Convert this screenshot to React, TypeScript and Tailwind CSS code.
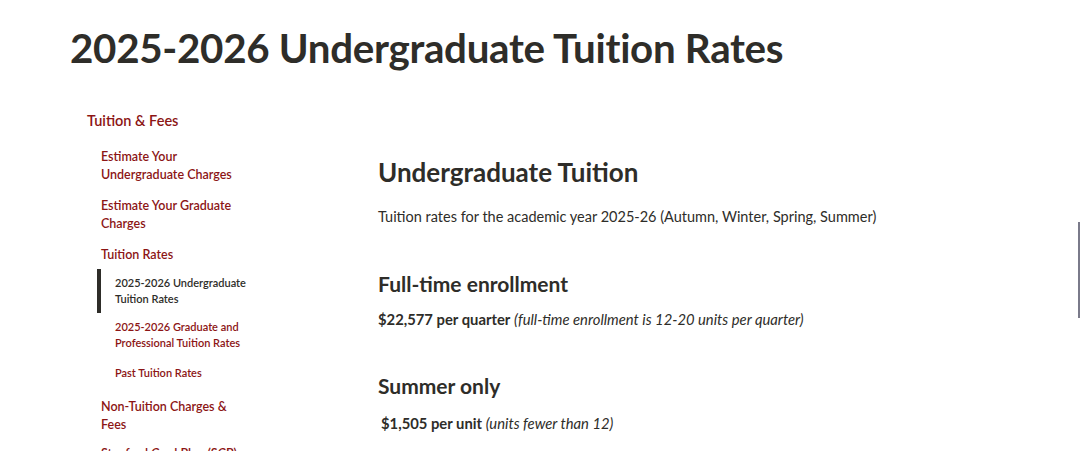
const NAV_RED = "text-[#8c1515]";

function SubLink({ children, active }: { children: React.ReactNode; active?: boolean }) {
  return (
    <li
      className={`border-l-4 pl-[14px] text-[11px] font-semibold leading-[16px] ${
        active ? "border-[#2e2d29] py-[6px] text-[#2e2d29]" : `border-transparent py-[5px] ${NAV_RED}`
      }`}
    >
      {children}
    </li>
  );
}

export default function App() {
  return (
    <div className="relative h-[451px] w-[1080px] overflow-hidden bg-white font-['Lato',sans-serif] text-[#2e2d29]">
      <h1 className="pl-[70px] pt-[24px] text-[40.3px] font-bold leading-[48px] tracking-[-0.3px]">
        2025-2026 Undergraduate Tuition Rates
      </h1>

      <div className="flex pt-[39px]">
        {/* sidebar */}
        <nav className="w-[290px] shrink-0 pl-[87px]">
          <p className={`text-[14.5px] font-semibold leading-[20px] ${NAV_RED}`}>Tuition &amp; Fees</p>
          <ul className="mt-[17px] w-[175px] pl-[14px]">
            <li className={`pb-[13px] text-[12.5px] font-semibold leading-[18px] ${NAV_RED}`}>
              Estimate Your
              <br />
              Undergraduate Charges
            </li>
            <li className={`pb-[13px] text-[12.5px] font-semibold leading-[18px] ${NAV_RED}`}>
              Estimate Your Graduate
              <br />
              Charges
            </li>
            <li className={`pb-[5px] text-[12.5px] font-semibold leading-[18px] ${NAV_RED}`}>Tuition Rates</li>
            <li>
              <ul className="-ml-[4px] pb-[12px]">
                <SubLink active>
                  2025-2026 Undergraduate
                  <br />
                  Tuition Rates
                </SubLink>
                <li className="h-[1px]" />
                <SubLink>
                  2025-2026 Graduate and
                  <br />
                  Professional Tuition Rates
                </SubLink>
                <li className="h-[4px]" />
                <SubLink>Past Tuition Rates</SubLink>
              </ul>
            </li>
            <li className={`pb-[11px] text-[12.5px] font-semibold leading-[18px] ${NAV_RED}`}>
              Non-Tuition Charges &amp;
              <br />
              Fees
            </li>
            <li className={`text-[12.5px] font-semibold leading-[18px] ${NAV_RED}`}>Stanford Card Plan (SCP)</li>
          </ul>
        </nav>

        {/* main content */}
        <main className="pl-[88px] pt-[45px]">
          <h2 className="text-[26px] font-bold leading-[32px]">Undergraduate Tuition</h2>
          <p className="mt-[18px] text-[14.5px] leading-[22px]">
            Tuition rates for the academic year 2025-26 (Autumn, Winter, Spring, Summer)
          </p>

          <h3 className="mt-[42px] text-[21px] font-bold leading-[28px]">Full-time enrollment</h3>
          <p className="mt-[10px] text-[14.8px] leading-[22px]">
            <span className="font-bold">$22,577 per quarter</span>{" "}
            <em>(full-time enrollment is 12-20 units per quarter)</em>
          </p>

          <h3 className="mt-[42px] text-[21px] font-bold leading-[28px]">Summer only</h3>
          <p className="mt-[12px] pl-[3px] text-[14.8px] leading-[22px]">
            <span className="font-bold">$1,505 per unit</span> <em>(units fewer than 12)</em>
          </p>
        </main>
      </div>

      <div className="absolute right-0 top-[222px] h-[96px] w-[2px] bg-[#7a7a8a]" />
    </div>
  );
}
